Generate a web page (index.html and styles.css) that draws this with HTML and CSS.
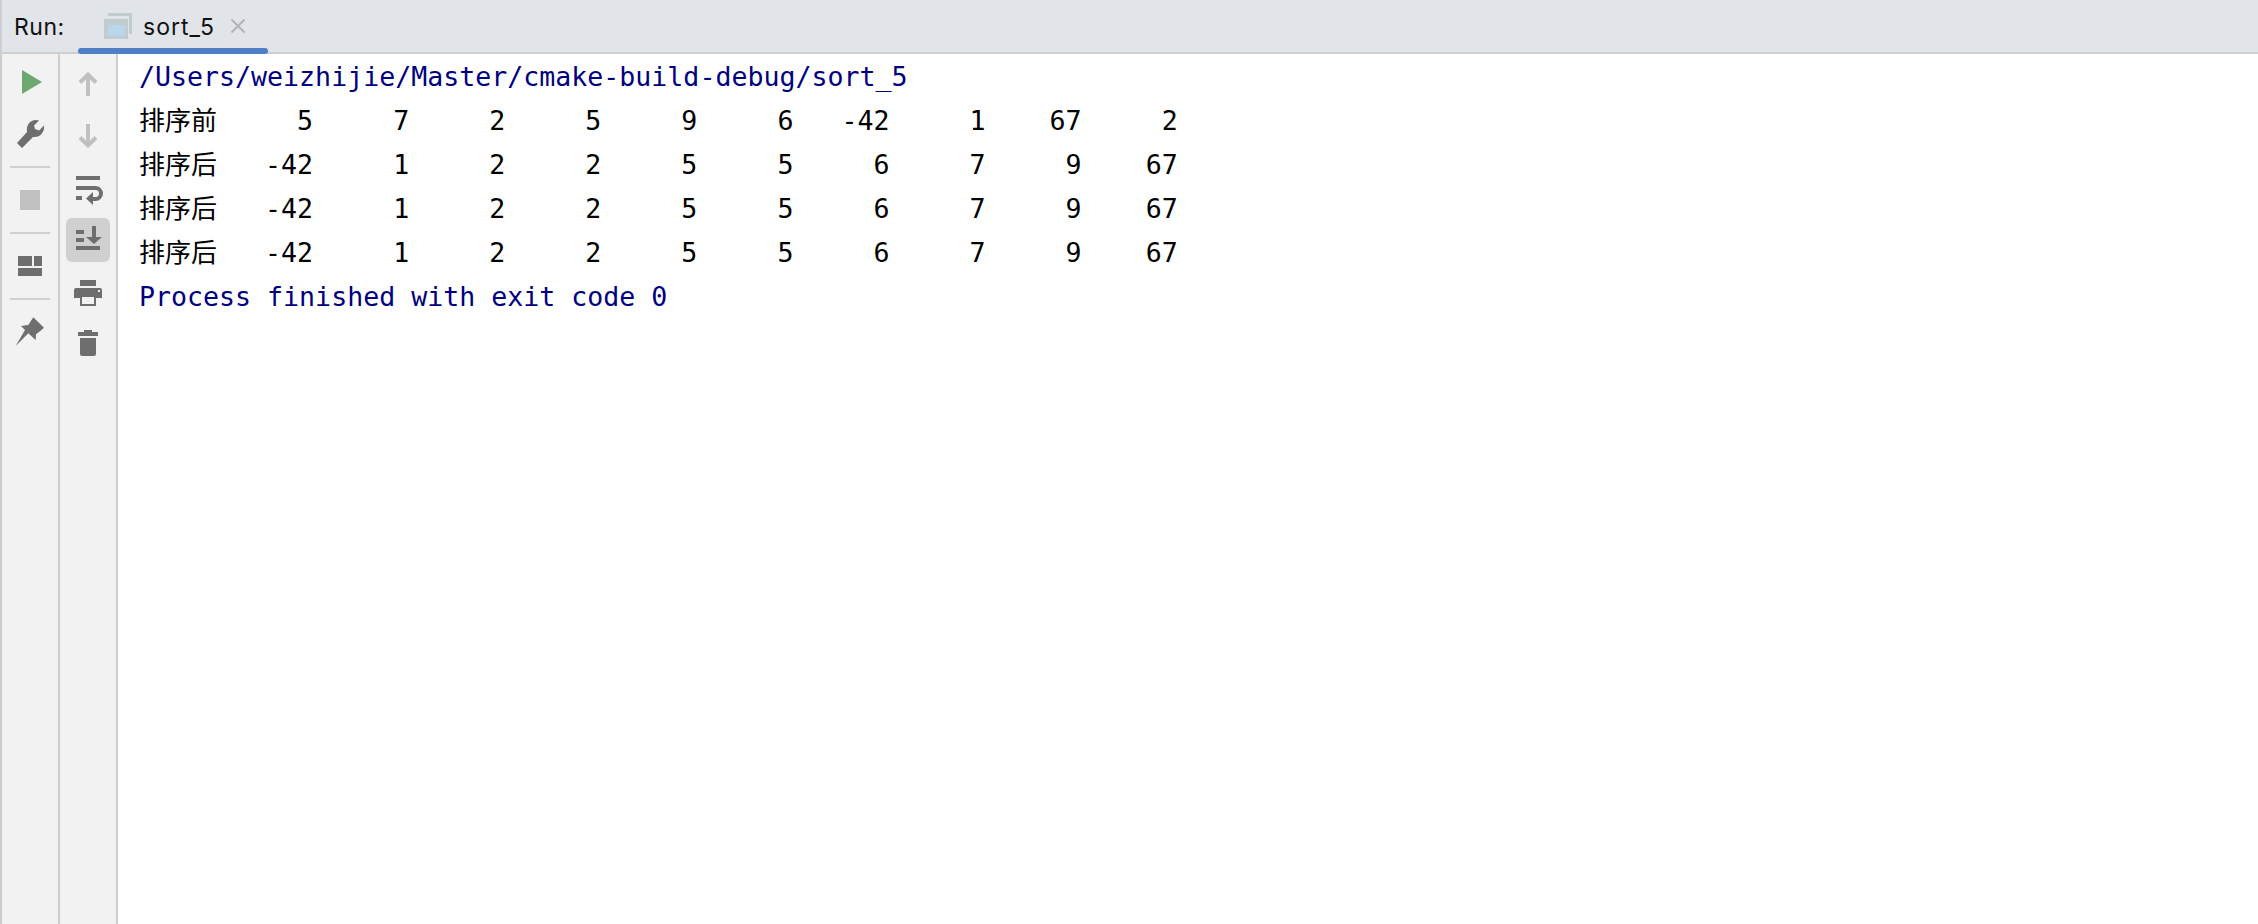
FILE: index.html
```html
<!DOCTYPE html>
<html lang="zh">
<head>
<meta charset="utf-8">
<title>Run: sort_5</title>
<link rel="stylesheet" href="styles.css">
</head>
<body>
<div class="window">
  <header class="tabbar">
    <span class="run-label">Run:</span>
    <div class="tab">
      <svg class="tab-icon" width="28" height="26" viewBox="0 0 28 26">
        <path class="tab-back" d="M4 1.5H26.5V21"/>
        <rect class="tab-frame" x="0" y="6" width="24" height="20"/>
        <rect class="tab-fill" x="4" y="12" width="17" height="11"/>
      </svg>
      <span class="tab-name">sort_5</span>
      <svg class="tab-close" width="14" height="14" viewBox="0 0 14 14"><path d="M0.5 0.5L13.5 13.5M13.5 0.5L0.5 13.5"/></svg>
    </div>
  </header>
  <div class="main">
    <nav class="rail rail-first">
      <button class="tool"><svg width="44" height="44" viewBox="0 0 44 44"><path class="green" d="M14 10L34 22L14 34Z"/></svg></button>
      <button class="tool"><svg width="44" height="44" viewBox="0 0 44 44"><path class="dark" d="M9 31L19 20C18 13 22 8 28 8L31 8.5L26 13.5L27 17L31 18.5L36 13.5C37 20 32 26 25 25L14 36Z"/></svg></button>
      <div class="sep"></div>
      <button class="tool"><svg width="44" height="44" viewBox="0 0 44 44"><rect class="light" x="12" y="12" width="20" height="20"/></svg></button>
      <div class="sep"></div>
      <button class="tool"><svg width="44" height="44" viewBox="0 0 44 44"><path class="dark" d="M10 12H24V22H10ZM26 12H34V22H26ZM10 24H34V32H10Z"/></svg></button>
      <div class="sep"></div>
      <button class="tool"><svg width="44" height="44" viewBox="0 0 44 44"><path class="dark" d="M25.3 7.3L36 17.7L31.3 21.7L28 24.3L27.7 30L20.3 23.3L7.7 36L17 20L13 16L20.3 15Z"/></svg></button>
    </nav>
    <nav class="rail rail-second">
      <button class="tool"><svg width="44" height="44" viewBox="0 0 44 44"><path class="light-line" d="M22 13V34M14 20.5L22 12.5L30 20.5"/></svg></button>
      <button class="tool"><svg width="44" height="44" viewBox="0 0 44 44"><path class="light-line" d="M22 10V31M14 23.5L22 31.5L30 23.5"/></svg></button>
      <button class="tool"><svg width="44" height="44" viewBox="0 0 44 44"><path class="dark" d="M10 10H34V14H10ZM10 30H16V34H10Z"/><path class="dark-line" d="M10 22H29.5A5.5 5.5 0 0 1 29.5 33H25"/><path class="dark" d="M20 32.5L27 26V39Z"/></svg></button>
      <button class="tool tool-active"><svg width="44" height="44" viewBox="0 0 44 44"><path class="dark" d="M10 12H18V16H10ZM10 20H18V24H10ZM10 28H34V32H10ZM26 8H30V19H36L28 26L20 19H26Z"/></svg></button>
      <button class="tool"><svg width="44" height="44" viewBox="0 0 44 44"><path class="dark" d="M14 10H30V16H14ZM10 18H34Q36 18 36 20V28H8V20Q8 18 10 18Z"/><rect class="tray" x="15" y="26" width="14" height="9"/><rect class="dot" x="32" y="20" width="2" height="2"/></svg></button>
      <button class="tool"><svg width="44" height="44" viewBox="0 0 44 44"><path class="dark" d="M18 8H26V10H32V14H12V10H18ZM14 16H30V32Q30 34 28 34H16Q14 34 14 32Z"/></svg></button>
    </nav>
    <pre class="console"><span class="sys">/Users/weizhijie/Master/cmake-build-debug/sort_5</span>
<span class="cjk">排序前</span>     5     7     2     5     9     6   -42     1    67     2
<span class="cjk">排序后</span>   -42     1     2     2     5     5     6     7     9    67
<span class="cjk">排序后</span>   -42     1     2     2     5     5     6     7     9    67
<span class="cjk">排序后</span>   -42     1     2     2     5     5     6     7     9    67
<span class="sys">Process finished with exit code 0</span></pre>
  </div>
</div>
</body>
</html>
```
FILE: styles.css
```css
* { box-sizing: border-box; }
html, body { margin: 0; height: 100%; background: #fff; overflow: hidden; }
.window { display: flex; flex-direction: column; height: 924px; width: 2258px; }

.tabbar {
  display: flex;
  align-items: center;
  height: 54px;
  flex: none;
  background: #e1e5e9;
  border-left: 2px solid #cdcfd2;
  border-bottom: 2px solid #cdcfd2;
  font-family: Inter, sans-serif;
  font-size: 23px;
  color: #111;
}
.run-label { padding: 2px 0 0 12px; width: 76px; letter-spacing: 0.5px; }
.tab {
  position: relative;
  display: flex;
  align-items: center;
  width: 190px;
  height: 52px;
  padding-left: 26px;
}
.tab::after {
  content: "";
  position: absolute;
  left: 0;
  right: 0;
  top: 48px;
  height: 6px;
  border-radius: 3px;
  background: #4f7fc6;
}
.tab-icon { flex: none; }
.tab-back { fill: none; stroke: #c2cbd0; stroke-width: 3; }
.tab-frame { fill: #c2cbd0; }
.tab-fill { fill: #b8d7ea; }
.tab-name { margin-left: 11px; padding-top: 2px; letter-spacing: 1px; }
.tab-close { margin-left: 16px; flex: none; }
.tab-close path { fill: none; stroke: #b0b4b8; stroke-width: 2; }

.main { display: flex; flex: 1; min-height: 0; }
.rail {
  display: flex;
  flex-direction: column;
  align-items: center;
  flex: none;
  background: #f2f2f2;
  border-right: 2px solid #cdcdcd;
}
.rail-first { width: 60px; padding-top: 2px; border-left: 2px solid #cdcdcd; }
.rail-second { width: 58px; padding-top: 4px; }
.tool {
  display: flex;
  align-items: center;
  justify-content: center;
  width: 44px;
  height: 52px;
  padding: 0;
  border: 0;
  background: none;
}
.tool svg { display: block; border-radius: 6px; }
.tool-active svg { background: #d0d0d0; }
.sep { width: 40px; height: 2px; margin: 6px 0; background: #d0d0d0; flex: none; }
.green { fill: #6ca86f; }
.dark { fill: #6e6e6e; }
.light { fill: #c0c0c0; }
.light-line { fill: none; stroke: #c0c0c0; stroke-width: 4; }
.dark-line { fill: none; stroke: #6e6e6e; stroke-width: 4; }
.tray { fill: #f2f2f2; stroke: #6e6e6e; stroke-width: 2; }
.dot { fill: #f2f2f2; }

.console {
  flex: 1;
  margin: 0;
  padding: 1px 0 0 21px;
  font-family: "DejaVu Sans Mono", "Noto Sans CJK SC", monospace;
  font-size: 26.6px;
  line-height: 44px;
  color: #000;
  background: #fff;
}
.sys { color: #000080; }
.cjk { font-family: "Noto Sans CJK SC", sans-serif; font-size: 26px; line-height: 0; }
```
